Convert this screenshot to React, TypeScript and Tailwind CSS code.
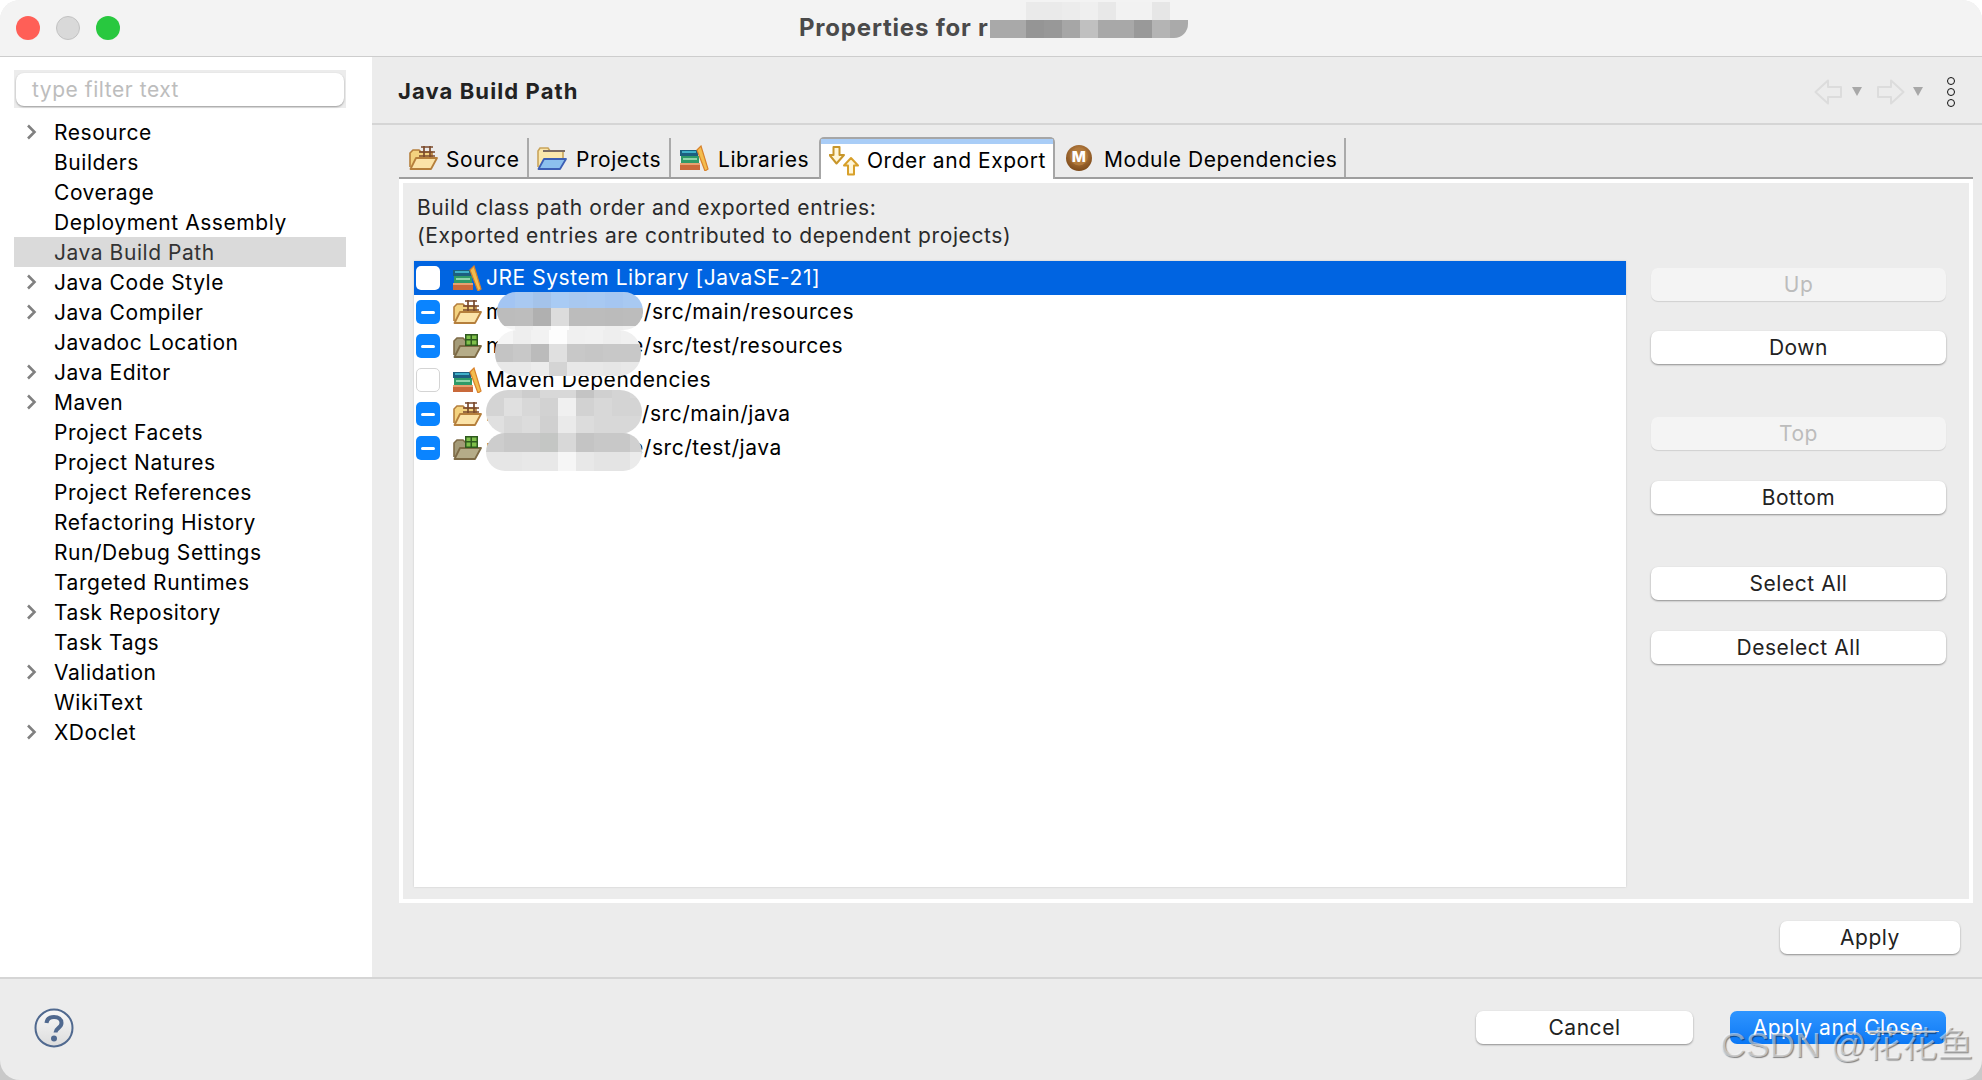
const treeItems = [
  {label: "Resource", arrow: true},
  {label: "Builders"},
  {label: "Coverage"},
  {label: "Deployment Assembly"},
  {label: "Java Build Path", selected: true},
  {label: "Java Code Style", arrow: true},
  {label: "Java Compiler", arrow: true},
  {label: "Javadoc Location"},
  {label: "Java Editor", arrow: true},
  {label: "Maven", arrow: true},
  {label: "Project Facets"},
  {label: "Project Natures"},
  {label: "Project References"},
  {label: "Refactoring History"},
  {label: "Run/Debug Settings"},
  {label: "Targeted Runtimes"},
  {label: "Task Repository", arrow: true},
  {label: "Task Tags"},
  {label: "Validation", arrow: true},
  {label: "WikiText"},
  {label: "XDoclet", arrow: true},
]

function PackageFolder() {
  return (
    <svg width="30" height="26" viewBox="0 0 30 26" fill="none">
      <path d="M2 22V8l3-3h6l2 2h11v6" fill="#f3d27f" stroke="#b57f3c" strokeWidth="1.6" />
      <path d="M2.5 24 8 13h21l-6 11z" fill="#fbe3a8" stroke="#b57f3c" strokeWidth="1.8" strokeLinejoin="round" />
      <path d="M13 2h12M11 7h16M16 1v11M22 1v11M11 11h16" stroke="#7b4a2c" strokeWidth="1.7" />
    </svg>
  )
}

function TestFolder() {
  return (
    <svg width="30" height="26" viewBox="0 0 30 26" fill="none">
      <path d="M2 22V8l3-3h6l2 2h11v6" fill="#a49b78" stroke="#7d6a45" strokeWidth="1.6" />
      <path d="M2.5 24 8 13h21l-6 11z" fill="#b5ac88" stroke="#7d6a45" strokeWidth="1.8" strokeLinejoin="round" />
      <rect x="13" y="1" width="13" height="12" fill="#2e5a1e" />
      <path d="M14.5 2.500h4v3.500h-4zM20 2.500h4.500v3.500H20zM14.500 7.500h4v4h-4zM20 7.500h4.500v4H20z" fill="#7fc04a" />
    </svg>
  )
}

function ProjectFolder() {
  return (
    <svg width="32" height="26" viewBox="0 0 32 26" fill="none">
      <path d="M3 22V6l2-3h8l2 3h13v7" fill="#fbe7ac" stroke="#c9a45a" strokeWidth="1.6" />
      <path d="M8 6h22" stroke="#7d6c62" strokeWidth="2" />
      <path d="M3.500 24 9 14h22l-6 10z" fill="#8cc0ee" stroke="#3d5fb5" strokeWidth="1.8" strokeLinejoin="round" />
    </svg>
  )
}

function Books() {
  return (
    <svg width="30" height="26" viewBox="0 0 30 26" fill="none">
      <rect x="1" y="18" width="20" height="7" fill="#c9693a" />
      <rect x="1" y="18" width="20" height="2" fill="#e6a070" />
      <rect x="2" y="11" width="18" height="7" fill="#2f9a68" />
      <rect x="4" y="13" width="14" height="2" fill="#8fd4ab" />
      <rect x="1" y="5" width="18" height="6" fill="#1c5f80" />
      <rect x="3" y="6" width="14" height="2" fill="#3fb0c8" />
      <path d="M18 5 22 1l7 23-3 2z" fill="#f3bd4e" stroke="#d9822b" strokeWidth="1.2" />
    </svg>
  )
}

function OrderArrows() {
  return (
    <svg width="30" height="30" viewBox="0 0 30 30" fill="none">
      <path d="M4.500 1h6v8H15l-7.500 8.500L0.500 9h4z" fill="#fff6d8" stroke="#c8962a" strokeWidth="2" strokeLinejoin="round" />
      <path d="M19 28.500v-9h-4l7-7.500 7 7.500h-4v9z" fill="#fff6d8" stroke="#d8a02a" strokeWidth="2" strokeLinejoin="round" />
    </svg>
  )
}

function MavenBadge() {
  return (
    <svg width="26" height="26" viewBox="0 0 26 26">
      <defs>
        <radialGradient id="mvn" cx="50%" cy="35%" r="65%">
          <stop offset="0%" stopColor="#c98f4e" />
          <stop offset="100%" stopColor="#7d4a1a" />
        </radialGradient>
      </defs>
      <circle cx="13" cy="13" r="13" fill="url(#mvn)" />
      <circle cx="13" cy="11.500" r="9" fill="#b27a3c" />
      <text x="13" y="17" textAnchor="middle" fontSize="15" fontWeight="800" fill="#fff" fontFamily="Inter, sans-serif">
        M
      </text>
    </svg>
  )
}

function NavArrow({flip}: {flip?: boolean}) {
  return (
    <svg width="29" height="26" viewBox="0 0 29 26" fill="none" className={flip ? "scale-x-[-1]" : ""}>
      <path d="M14 1.500 1.500 13 14 24.500V18h13V8H14z" stroke="#dcdcdc" strokeWidth="2" strokeLinejoin="round" />
    </svg>
  )
}

function Tri() {
  return <div className="h-0 w-0 border-x-[5px] border-t-[9px] border-x-transparent border-t-[#a8a8a8]" />
}

function Btn({label, disabled, className = ""}: {label: string; disabled?: boolean; className?: string}) {
  return (
    <div
      className={`flex h-[33px] items-center justify-center rounded-[7px] pt-px ${
        disabled
          ? "bg-[#f4f4f4] text-[#bcbcbc] shadow-[0_1px_1px_rgba(0,0,0,0.12)]"
          : "bg-white text-[#222] shadow-[0_1px_2px_rgba(0,0,0,0.4)]"
      } ${className}`}
    >
      {label}
    </div>
  )
}

function Blob({rows, className}: {rows: {h: string; tiles: string[]}[]; className: string}) {
  return (
    <div className={`absolute flex flex-col overflow-hidden ${className}`}>
      {rows.map((row, i) => (
        <div key={i} className={`flex shrink-0 ${row.h}`}>
          {row.tiles.map((t, j) => (
            <div key={j} className={`w-[18px] shrink-0 ${t}`} />
          ))}
        </div>
      ))}
    </div>
  )
}

function Row({
  label,
  tail,
  gapClass = "",
  checked,
  selected,
  icon,
}: {
  label: string
  tail?: string
  gapClass?: string
  checked?: boolean
  selected?: boolean
  icon: React.ReactNode
}) {
  return (
    <div className={`flex h-[34px] items-center pl-[2px] ${selected ? "bg-[#0064e1] text-white" : "text-black"}`}>
      {checked ? (
        <div className="flex h-6 w-6 items-center justify-center rounded-[5px] bg-[#0a84ff]">
          <div className="h-[3px] w-[14px] rounded-full bg-white" />
        </div>
      ) : (
        <div className={`h-6 w-6 rounded-[5px] ${selected ? "bg-white" : "border border-[#d4d4d4] bg-white"}`} />
      )}
      <div className="ml-3 flex w-[30px] justify-center">{icon}</div>
      <span className={`ml-[4px] ${gapClass}`}>{label}</span>
      {tail && <span>{tail}</span>}
    </div>
  )
}

export default function App() {
  return (
    <div className="relative h-[1080px] w-[1982px] overflow-hidden bg-[#c9c9c9] font-['Inter','Noto_Sans_CJK_SC',sans-serif] text-[21px] tracking-[0.55px]">
      <div className="absolute left-0 top-0 h-[30px] w-full bg-white" />
      <div className="relative flex h-full flex-col overflow-hidden rounded-[20px] bg-[#ececec]">
        {/* title bar */}
        <div className="relative flex h-[57px] shrink-0 items-center border-b border-[#cdcdcd] bg-[#f3f3f3] pl-4">
          <div className="h-6 w-6 rounded-full bg-[#ff5f57]" />
          <div className="ml-4 h-6 w-6 rounded-full border border-[#c2c2c2] bg-[#d9d9d9]" />
          <div className="ml-4 h-6 w-6 rounded-full bg-[#28c83f]" />
          <span className="ml-[679px] text-[24px] font-bold tracking-[0.8px] text-[#4a4a4a]">Properties for r</span>
        </div>

        <div className="flex min-h-0 flex-1">
          {/* sidebar */}
          <div className="w-[372px] shrink-0 bg-white pl-[14px] pr-[26px] pt-[13px]">
            <div className="flex h-[38px] items-center bg-[#ececec] px-[2px]">
              <div className="flex h-[33px] w-full items-center rounded-[8px] bg-white pl-4 pt-[2px] text-[#bdbdbd] shadow-[0_1px_2px_rgba(0,0,0,0.35)]">
                type filter text
              </div>
            </div>
            <div className="mt-[9px]">
              {treeItems.map((item) => (
                <div
                  key={item.label}
                  className={`flex h-[30px] items-center ${item.selected ? "bg-[#dadada] text-[#333]" : "text-black"}`}
                >
                  <div className="flex w-10 justify-start pl-[12px]">
                    {item.arrow && (
                      <svg width="11" height="16" viewBox="0 0 11 16" fill="none">
                        <path d="M2 1.500 8.500 8 2 14.500" stroke="#808080" strokeWidth="2.600" />
                      </svg>
                    )}
                  </div>
                  <span className="pt-px">{item.label}</span>
                </div>
              ))}
            </div>
          </div>

          {/* main panel */}
          <div className="flex min-w-0 flex-1 flex-col">
            <div className="flex h-[68px] shrink-0 items-center border-b-2 border-[#d5d5d5] pl-[26px] pr-[27px] pt-[3px]">
              <span className="text-[22px] font-bold tracking-[1.1px] text-[#222]">Java Build Path</span>
              <div className="ml-auto flex items-center">
                <NavArrow />
                <div className="ml-[9px]"><Tri /></div>
                <div className="ml-[14px]"><NavArrow flip /></div>
                <div className="ml-[8px]"><Tri /></div>
                <div className="ml-[24px] flex flex-col gap-[3px]">
                  <div className="h-2 w-2 rounded-full border border-[#111]" />
                  <div className="h-2 w-2 rounded-full border border-[#111]" />
                  <div className="h-2 w-2 rounded-full border border-[#111]" />
                </div>
              </div>
            </div>

            <div className="flex min-h-0 flex-1 flex-col pl-[27px] pr-[9px] pt-[13px]">
              {/* tabs */}
              <div className="flex h-[41px] shrink-0 border-b-2 border-[#9e9e9e] text-black">
                <div className="flex w-[130px] items-center border-r-2 border-[#aaa] pl-[9px] pt-1">
                  <div className="-mt-1"><PackageFolder /></div>
                  <span className="ml-[8px]">Source</span>
                </div>
                <div className="flex w-[142px] items-center border-r-2 border-[#aaa] pl-[6px] pt-1">
                  <div className="-mt-1"><ProjectFolder /></div>
                  <span className="ml-[9px]">Projects</span>
                </div>
                <div className="flex w-[148px] items-center pl-[8px] pt-1">
                  <div className="-mt-1"><Books /></div>
                  <span className="ml-[9px]">Libraries</span>
                </div>
                <div className="relative -mb-[2px] -mt-px flex w-[236px] items-center rounded-t-[5px] border-x-2 border-t-2 border-[#a6a6a6] bg-white pl-2 pt-[3px]">
                  <div className="absolute inset-x-0 top-0 h-[5px] bg-[#a9cdf7]" />
                  <OrderArrows />
                  <span className="ml-[8px]">Order and Export</span>
                </div>
                <div className="flex w-[291px] items-center border-r-2 border-[#aaa] pl-[11px] pt-1">
                  <div className="-mt-1"><MavenBadge /></div>
                  <span className="ml-[12px]">Module Dependencies</span>
                </div>
              </div>

              {/* page */}
              <div className="flex h-[724px] shrink-0 border-4 border-white">
                <div className="flex min-w-0 flex-1 flex-col pl-[11px]">
                  <div className="mt-[11px] pl-[3px] leading-[28px] tracking-[0.6px] text-[#2a2a2a]">
                    <div>Build class path order and exported entries:</div>
                    <div>(Exported entries are contributed to dependent projects)</div>
                  </div>
                  <div className="mt-[11px] h-[626px] w-[1212px] bg-white shadow-[0_0_2px_rgba(0,0,0,0.15)]">
                    <Row selected label="JRE System Library [JavaSE-21]" icon={<Books />} />
                    <Row checked label="m" tail="e/src/main/resources" gapClass="w-[145px]" icon={<PackageFolder />} />
                    <Row checked label="m" tail="e/src/test/resources" gapClass="w-[145px]" icon={<TestFolder />} />
                    <Row label="Maven Dependencies" icon={<Books />} />
                    <Row checked label="m" tail="e/src/main/java" gapClass="w-[143px]" icon={<PackageFolder />} />
                    <Row checked label="m" tail="e/src/test/java" gapClass="w-[145px]" icon={<TestFolder />} />
                  </div>
                </div>
                <div className="ml-[25px] mr-[23px] flex w-[295px] shrink-0 flex-col pt-[85px]">
                  <Btn disabled label="Up" />
                  <Btn label="Down" className="mt-[30px]" />
                  <Btn disabled label="Top" className="mt-[53px]" />
                  <Btn label="Bottom" className="mt-[31px]" />
                  <Btn label="Select All" className="mt-[53px]" />
                  <Btn label="Deselect All" className="mt-[31px]" />
                </div>
              </div>

              <div className="mr-[13px] mt-[18px] flex justify-end">
                <Btn label="Apply" className="w-[180px]" />
              </div>
            </div>
          </div>
        </div>

        {/* footer */}
        <div className="flex h-[103px] shrink-0 items-center border-t-2 border-[#d5d5d5] pb-[4px] pl-[34px] pr-[36px]">
          <svg width="40" height="40" viewBox="0 0 40 40" fill="none">
            <defs>
              <linearGradient id="help" x1="0" y1="0" x2="0" y2="1">
                <stop offset="0%" stopColor="#f8f8f8" />
                <stop offset="100%" stopColor="#dcdcdc" />
              </linearGradient>
            </defs>
            <circle cx="20" cy="20" r="18.500" fill="url(#help)" stroke="#50698f" strokeWidth="2" />
            <path
              d="M12.500 15c.5-4 3.500-6 7.500-6 4.500 0 7.500 2.300 7.500 6 0 5-6 5.200-6 9.500"
              stroke="#50698f"
              strokeWidth="4"
              fill="none"
            />
            <circle cx="20" cy="30.500" r="3" fill="#50698f" />
          </svg>
          <div className="ml-auto flex">
            <Btn label="Cancel" className="w-[217px]" />
            <div className="ml-[37px] flex h-[33px] w-[216px] items-center justify-center rounded-[7px] bg-gradient-to-b from-[#2e95ff] to-[#0a78f5] pt-px text-white">
              Apply and Close
            </div>
          </div>
        </div>
      </div>

      {/* mosaics over the redacted names */}
      <Blob
        className="left-[990px] top-[2px] h-[36px] w-[198px] rounded-br-[14px]"
        rows={[
          {h: "h-[18px]", tiles: ["bg-[#f3f3f3]", "bg-[#f3f3f3]", "bg-[#eaeaea]", "bg-[#eaeaea]", "bg-[#ececec]", "bg-[#efefef]", "bg-[#e8e8e8]", "bg-[#f2f2f2]", "bg-[#f2f2f2]", "bg-[#e6e6e6]", "bg-[#f3f3f3]"]},
          {h: "h-[18px]", tiles: ["bg-[#a9a9a9]", "bg-[#a9a9a9]", "bg-[#959595]", "bg-[#989898]", "bg-[#a6a6a6]", "bg-[#c0c0c0]", "bg-[#a8a8a8]", "bg-[#a8a8a8]", "bg-[#999999]", "bg-[#b4b4b4]", "bg-[#aaaaaa]"]},
        ]}
      />
      <Blob
        className="left-[497px] top-[292px] h-[38px] w-[146px] rounded-[20px]"
        rows={[
          {h: "h-[16px]", tiles: ["bg-[#a3c5f3]", "bg-[#a9c9f1]", "bg-[#a4c3ea]", "bg-[#a9cbf4]", "bg-[#a8c8f0]", "bg-[#a8c9f2]", "bg-[#a5c6f1]", "bg-[#a8c9f2]", "bg-[#a8c9f2]"]},
          {h: "h-[18px]", tiles: ["bg-[#bcbcbc]", "bg-[#bdbdbd]", "bg-[#b0b0b0]", "bg-[#dcdcdc]", "bg-[#bcbcbc]", "bg-[#bcbcbc]", "bg-[#bbbbbb]", "bg-[#bcbcbc]", "bg-[#bcbcbc]"]},
          {h: "h-[18px]", tiles: ["bg-[#f5f5f5]", "bg-[#eeeeee]", "bg-[#f2f2f2]", "bg-[#fdfdfd]", "bg-[#f0f0f0]", "bg-[#f1f1f1]", "bg-[#eeeeee]", "bg-[#f0f0f0]", "bg-[#f0f0f0]"]},
        ]}
      />
      <Blob
        className="left-[495px] top-[330px] h-[46px] w-[146px] rounded-[22px]"
        rows={[
          {h: "h-[14px]", tiles: ["bg-[#f5f5f5]", "bg-[#eeeeee]", "bg-[#f2f2f2]", "bg-[#fdfdfd]", "bg-[#f0f0f0]", "bg-[#f1f1f1]", "bg-[#eeeeee]", "bg-[#f0f0f0]", "bg-[#f0f0f0]"]},
          {h: "h-[18px]", tiles: ["bg-[#c4c4c4]", "bg-[#c8c8c8]", "bg-[#bbbbbb]", "bg-[#e0e0e0]", "bg-[#c8c8c8]", "bg-[#c6c6c6]", "bg-[#c8c8c8]", "bg-[#c8c8c8]", "bg-[#c8c8c8]"]},
          {h: "h-[14px]", tiles: ["bg-[#e8e8e8]", "bg-[#e8e8e8]", "bg-[#ececec]", "bg-[#d4d4d4]", "bg-[#e8e8e8]", "bg-[#e8e8e8]", "bg-[#e6e6e6]", "bg-[#e8e8e8]", "bg-[#e8e8e8]"]},
        ]}
      />
      <Blob
        className="left-[486px] top-[390px] h-[44px] w-[156px] rounded-[22px]"
        rows={[
          {h: "h-[8px]", tiles: ["bg-[#d4d4d4]", "bg-[#d4d4d4]", "bg-[#cdcdcd]", "bg-[#d8d8d8]", "bg-[#d8d8d8]", "bg-[#c4c4c4]", "bg-[#d0d0d0]", "bg-[#d4d4d4]", "bg-[#d8d8d8]"]},
          {h: "h-[18px]", tiles: ["bg-[#d4d4d4]", "bg-[#e0e0e0]", "bg-[#d8d8d8]", "bg-[#d2d2d2]", "bg-[#f0f0f0]", "bg-[#d2d2d2]", "bg-[#d8d8d8]", "bg-[#d4d4d4]", "bg-[#d4d4d4]"]},
          {h: "h-[18px]", tiles: ["bg-[#e0e0e0]", "bg-[#d8d8d8]", "bg-[#dcdcdc]", "bg-[#d0d0d0]", "bg-[#eaeaea]", "bg-[#dcdcdc]", "bg-[#d8d8d8]", "bg-[#d8d8d8]", "bg-[#d8d8d8]"]},
        ]}
      />
      <Blob
        className="left-[486px] top-[433px] h-[38px] w-[156px] rounded-[20px]"
        rows={[
          {h: "h-[19px]", tiles: ["bg-[#cdcdcd]", "bg-[#c8c8c8]", "bg-[#c8c8c8]", "bg-[#c4c6c4]", "bg-[#d8d8d8]", "bg-[#c4c4c4]", "bg-[#c8c8c8]", "bg-[#c8c8c8]", "bg-[#d0d0d0]"]},
          {h: "h-[19px]", tiles: ["bg-[#e6e6e6]", "bg-[#e6e6e6]", "bg-[#e8e8e8]", "bg-[#e8e8e8]", "bg-[#f6f6f6]", "bg-[#e8e8e8]", "bg-[#e4e4e4]", "bg-[#e4e4e4]", "bg-[#ebebeb]"]},
        ]}
      />

      {/* CSDN watermark */}
      <div className="absolute left-[1720px] top-[1023px] whitespace-nowrap font-['Liberation_Sans','Noto_Sans_CJK_SC',sans-serif] text-[35.500px] leading-[44px] tracking-normal text-white/50 [text-shadow:1px_1px_1px_rgba(0,0,0,0.45)]">
        CSDN @花花鱼
      </div>
      <div className="absolute left-[1865px] top-[1031px] h-px w-[74px] bg-[#d8d8d8]" />
    </div>
  )
}
